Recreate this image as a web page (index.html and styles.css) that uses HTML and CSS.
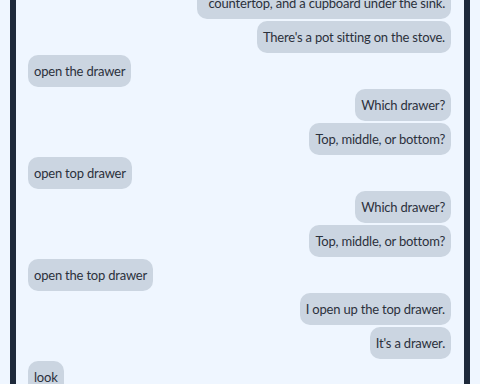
FILE: index.html
```html
<!DOCTYPE html>
<html lang="en">
<head>
    <meta charset="UTF-8">
    <meta name="viewport" content="width=device-width, initial-scale=1.0">
    <title>Adventure</title>
    <link rel="stylesheet" href="styles.css">
</head>
<body>
    <div class="chat">
        <div class="log" id="log">
            <div class="msg game">You are standing in a small kitchen. There's a stove, a drawer beside the<br>countertop, and a cupboard under the sink.</div>
            <div class="msg game" id="anchor">There's a pot sitting on the stove.</div>
            <div class="msg player">open the drawer</div>
            <div class="msg game">Which drawer?</div>
            <div class="msg game">Top, middle, or bottom?</div>
            <div class="msg player">open top drawer</div>
            <div class="msg game">Which drawer?</div>
            <div class="msg game">Top, middle, or bottom?</div>
            <div class="msg player">open the top drawer</div>
            <div class="msg game">I open up the top drawer.</div>
            <div class="msg game">It's a drawer.</div>
            <div class="msg player">look</div>
            <div class="msg game">You are in a kitchen.</div>
        </div>
    </div>

    <script>
        const log = document.getElementById('log');
        const anchor = document.getElementById('anchor');
        log.scrollTop = anchor.offsetTop - log.offsetTop - 21;
    </script>
</body>
</html>
```

FILE: styles.css
```css
html, body {
    margin: 0;
    padding: 0;
    height: 100%;
    background-color: #eff6ff;
}

body {
    font-family: Lato, "Open Sans", sans-serif;
    font-size: 13px;
    letter-spacing: -0.2px;
    line-height: 20px;
    color: #2b313c;
    overflow: hidden;
}

.chat {
    margin: 0 10px;
    height: 100vh;
    border-left: 6px solid #1e293b;
    border-right: 6px solid #1e293b;
    background-color: #eff6ff;
}

.log {
    height: 100%;
    overflow: hidden;
    padding: 0 13px 0 12px;
    display: flex;
    flex-direction: column;
    align-items: flex-start;
    gap: 2px;
}

.msg {
    box-sizing: border-box;
    max-width: 60%;
    padding: 6px;
    border-radius: 10px;
    background-color: #cbd5e1;
}

.msg.game {
    align-self: flex-end;
    text-align: right;
}
```
